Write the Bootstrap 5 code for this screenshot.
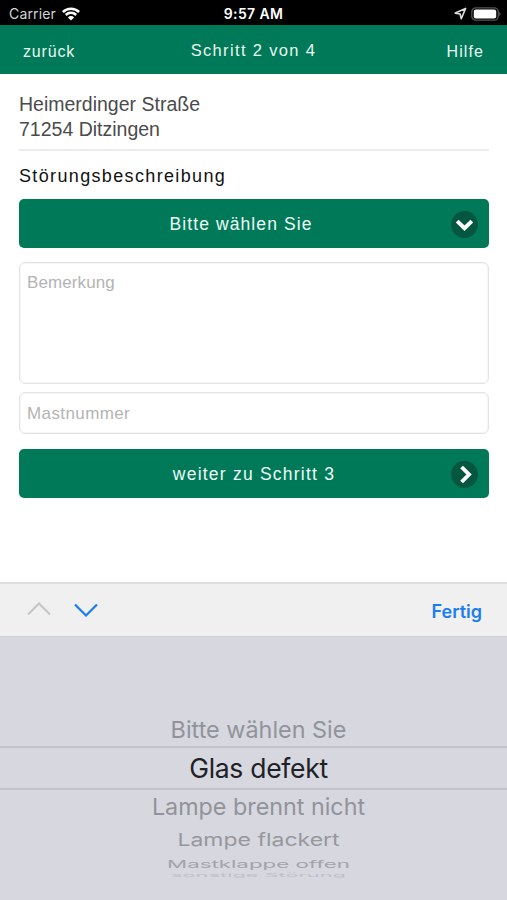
<!DOCTYPE html>
<html lang="de">
<head>
<meta charset="utf-8">
<meta name="viewport" content="width=device-width, initial-scale=1">
<title>Störung melden</title>
<link rel="stylesheet" href="https://cdn.jsdelivr.net/npm/bootstrap@5.3.0/dist/css/bootstrap.min.css">
<style>
body{font-family:"Liberation Sans",Arial,sans-serif;height:900px;overflow:hidden;background:#fff}
.ios{font-family:Inter,sans-serif}
.statusbar{height:25px;background:#000;color:#fff;padding:2px 5px 0 9px}
.statusbar .carrier{font-size:14px;color:#d4d4d4;letter-spacing:.15px}
.statusbar .clock{font-size:14px;font-weight:600;letter-spacing:.35px;margin-right:4px}
.side{flex:1 1 0}
.appbar{height:49px;background:#007958;color:#e9f7f1;padding:0 23px;line-height:20px}
.appbar a{color:inherit;text-decoration:none;font-size:16px;padding-top:4px}
.appbar .back{letter-spacing:.85px}
.appbar .help{letter-spacing:1.1px}
.appbar h1{font-size:16.5px;letter-spacing:1.35px;line-height:20px;font-weight:400}
main{height:508px;padding:18px 18px 0 19px}
.address{font-size:19.5px;line-height:24.5px;color:#4b4b4b;height:59px;border-bottom:2px solid #ececec}
.field-title{font-size:18px;line-height:24px;letter-spacing:1.35px;color:#111;margin:13px 0 11px}
.action{height:49px;border:0;border-radius:5px;background:#007958;color:#eefaf5;font-size:17.5px;letter-spacing:1.22px;padding:2px 11px 0 38px}
.action:hover{background:#006a4d;color:#fff}
.action.choose{padding-left:12px;letter-spacing:1.1px}
.action svg{margin-top:-1px}
.form-control{border:1.5px solid #e4e4e4;border-radius:6px;padding:8px 7px;font-size:17px;line-height:24px;color:#333;resize:none;box-shadow:inset 0 0 0 .5px #eee}
.form-control::placeholder{color:#b4b4b4;opacity:1}
.note{height:122px;margin-top:14px;letter-spacing:.1px}
.mast{height:42px;margin-top:8px;letter-spacing:.4px;padding-top:9px}
.next-step{margin-top:15px}
.toolbar{height:55px;background:#f0f0f0;border-top:2px solid #dedede;border-bottom:1px solid #d2d2d6;padding:0 25px 0 27px}
.toolbar .done{font-size:18px;font-weight:600;color:#1a7df0;text-decoration:none;padding-top:2px}
.picker{height:263px;background:#d6d7df;padding-top:75px}
.opt{display:flex;align-items:center;justify-content:center;white-space:nowrap;color:#929399;line-height:1}
.opt span{display:block;position:relative}
.opt{padding-left:10px}
.o1{height:34px;font-size:23.4px}
.o1 span{top:1px}
.o2{height:44px;font-size:26.5px;letter-spacing:-.3px;color:#202126;border-top:2px solid #c2c3ca;border-bottom:2px solid #c2c3ca}
.o3{height:34px;font-size:23.3px}
.o4{height:33px;font-size:23px;color:#96979d}
.o4 span{transform:scaleY(.77)}
.o5{height:14px;font-size:22.3px;color:#a3a4aa}
.o5 span{transform:scaleY(.48)}
.o6{height:8px;font-size:21.8px;color:#bfc0c7;overflow:hidden}
.o6 span{transform:scaleY(.25)}
</style>
</head>
<body class="d-flex flex-column">
<div class="statusbar ios d-flex align-items-center flex-shrink-0">
  <div class="side d-flex align-items-center"><span class="carrier">Carrier</span>
    <svg style="margin-left:6px" width="18" height="14" viewBox="0 0 18 14" fill="none" stroke="#fff" stroke-width="2.5"><path d="M.9 5a11.5 11.5 0 0 1 16.2 0"/><path d="M3.8 8a7.4 7.4 0 0 1 10.4 0"/><path d="M9 13.6 5.9 10.4a4.4 4.4 0 0 1 6.2 0z" fill="#fff" stroke="none"/></svg>
  </div>
  <span class="clock">9:57 AM</span>
  <div class="side d-flex align-items-center justify-content-end">
    <svg class="me-1" width="13" height="13" viewBox="0 0 13 13" fill="none" stroke="#ddd" stroke-width="1.6" stroke-linejoin="round"><path d="M1.3 6.1 11.6 1.4 7.3 11.7 6.1 7z"/></svg>
    <svg width="31" height="14" viewBox="0 0 31 14"><rect x=".8" y=".8" width="26.4" height="12.4" rx="4" fill="none" stroke="#555" stroke-width="1.3"/><rect x="2.8" y="2.6" width="22.4" height="8.8" rx="2" fill="#fff"/><path d="M28.3 4.8q2.4 2.2 0 4.4z" fill="#666"/></svg>
  </div>
</div>
<header class="appbar d-flex align-items-center flex-shrink-0">
  <div class="side"><a class="back d-inline-block" href="#">zurück</a></div>
  <h1 class="m-0">Schritt 2 von 4</h1>
  <div class="side text-end"><a class="help d-inline-block" href="#">Hilfe</a></div>
</header>
<main class="flex-shrink-0">
  <div class="address">Heimerdinger Straße<br>71254 Ditzingen</div>
  <h2 class="field-title fw-normal">Störungsbeschreibung</h2>
  <button type="button" class="btn action choose w-100 d-flex align-items-center"><span class="flex-grow-1">Bitte wählen Sie</span>
    <svg width="27" height="27" viewBox="0 0 27 27"><circle cx="13.5" cy="13.5" r="13.4" fill="#045640"/><path d="m6.2 10.2 7.3 7 7.3-7" fill="none" stroke="#fff" stroke-width="3.9"/></svg>
  </button>
  <textarea class="form-control note" placeholder="Bemerkung"></textarea>
  <input class="form-control mast" placeholder="Mastnummer">
  <button type="button" class="btn action next-step w-100 d-flex align-items-center"><span class="flex-grow-1">weiter zu Schritt 3</span>
    <svg width="27" height="27" viewBox="0 0 27 27"><circle cx="13.5" cy="13.5" r="13.4" fill="#045640"/><path d="m10.6 6 7.4 7.5-7.4 7.5" fill="none" stroke="#fff" stroke-width="3.9"/></svg>
  </button>
</main>
<div class="toolbar ios d-flex align-items-center flex-shrink-0">
  <svg style="margin-top:-2px" width="24" height="14" viewBox="0 0 24 14" fill="none" stroke="#c4c4c6" stroke-width="2"><path d="M1 12.5 12 1.5l11 11"/></svg>
  <svg style="margin-left:23px" width="24" height="14" viewBox="0 0 24 14" fill="none" stroke="#1a7df0" stroke-width="2.2"><path d="m1 1.5 11 11 11-11"/></svg>
  <a class="done ms-auto" href="#">Fertig</a>
</div>
<div class="picker ios flex-shrink-0">
  <div class="opt o1"><span>Bitte wählen Sie</span></div>
  <div class="opt o2"><span>Glas defekt</span></div>
  <div class="opt o3"><span>Lampe brennt nicht</span></div>
  <div class="opt o4"><span>Lampe flackert</span></div>
  <div class="opt o5"><span>Mastklappe offen</span></div>
  <div class="opt o6"><span>sonstige Störung</span></div>
</div>
<script src="https://cdn.jsdelivr.net/npm/bootstrap@5.3.0/dist/js/bootstrap.bundle.min.js"></script>
</body>
</html>
